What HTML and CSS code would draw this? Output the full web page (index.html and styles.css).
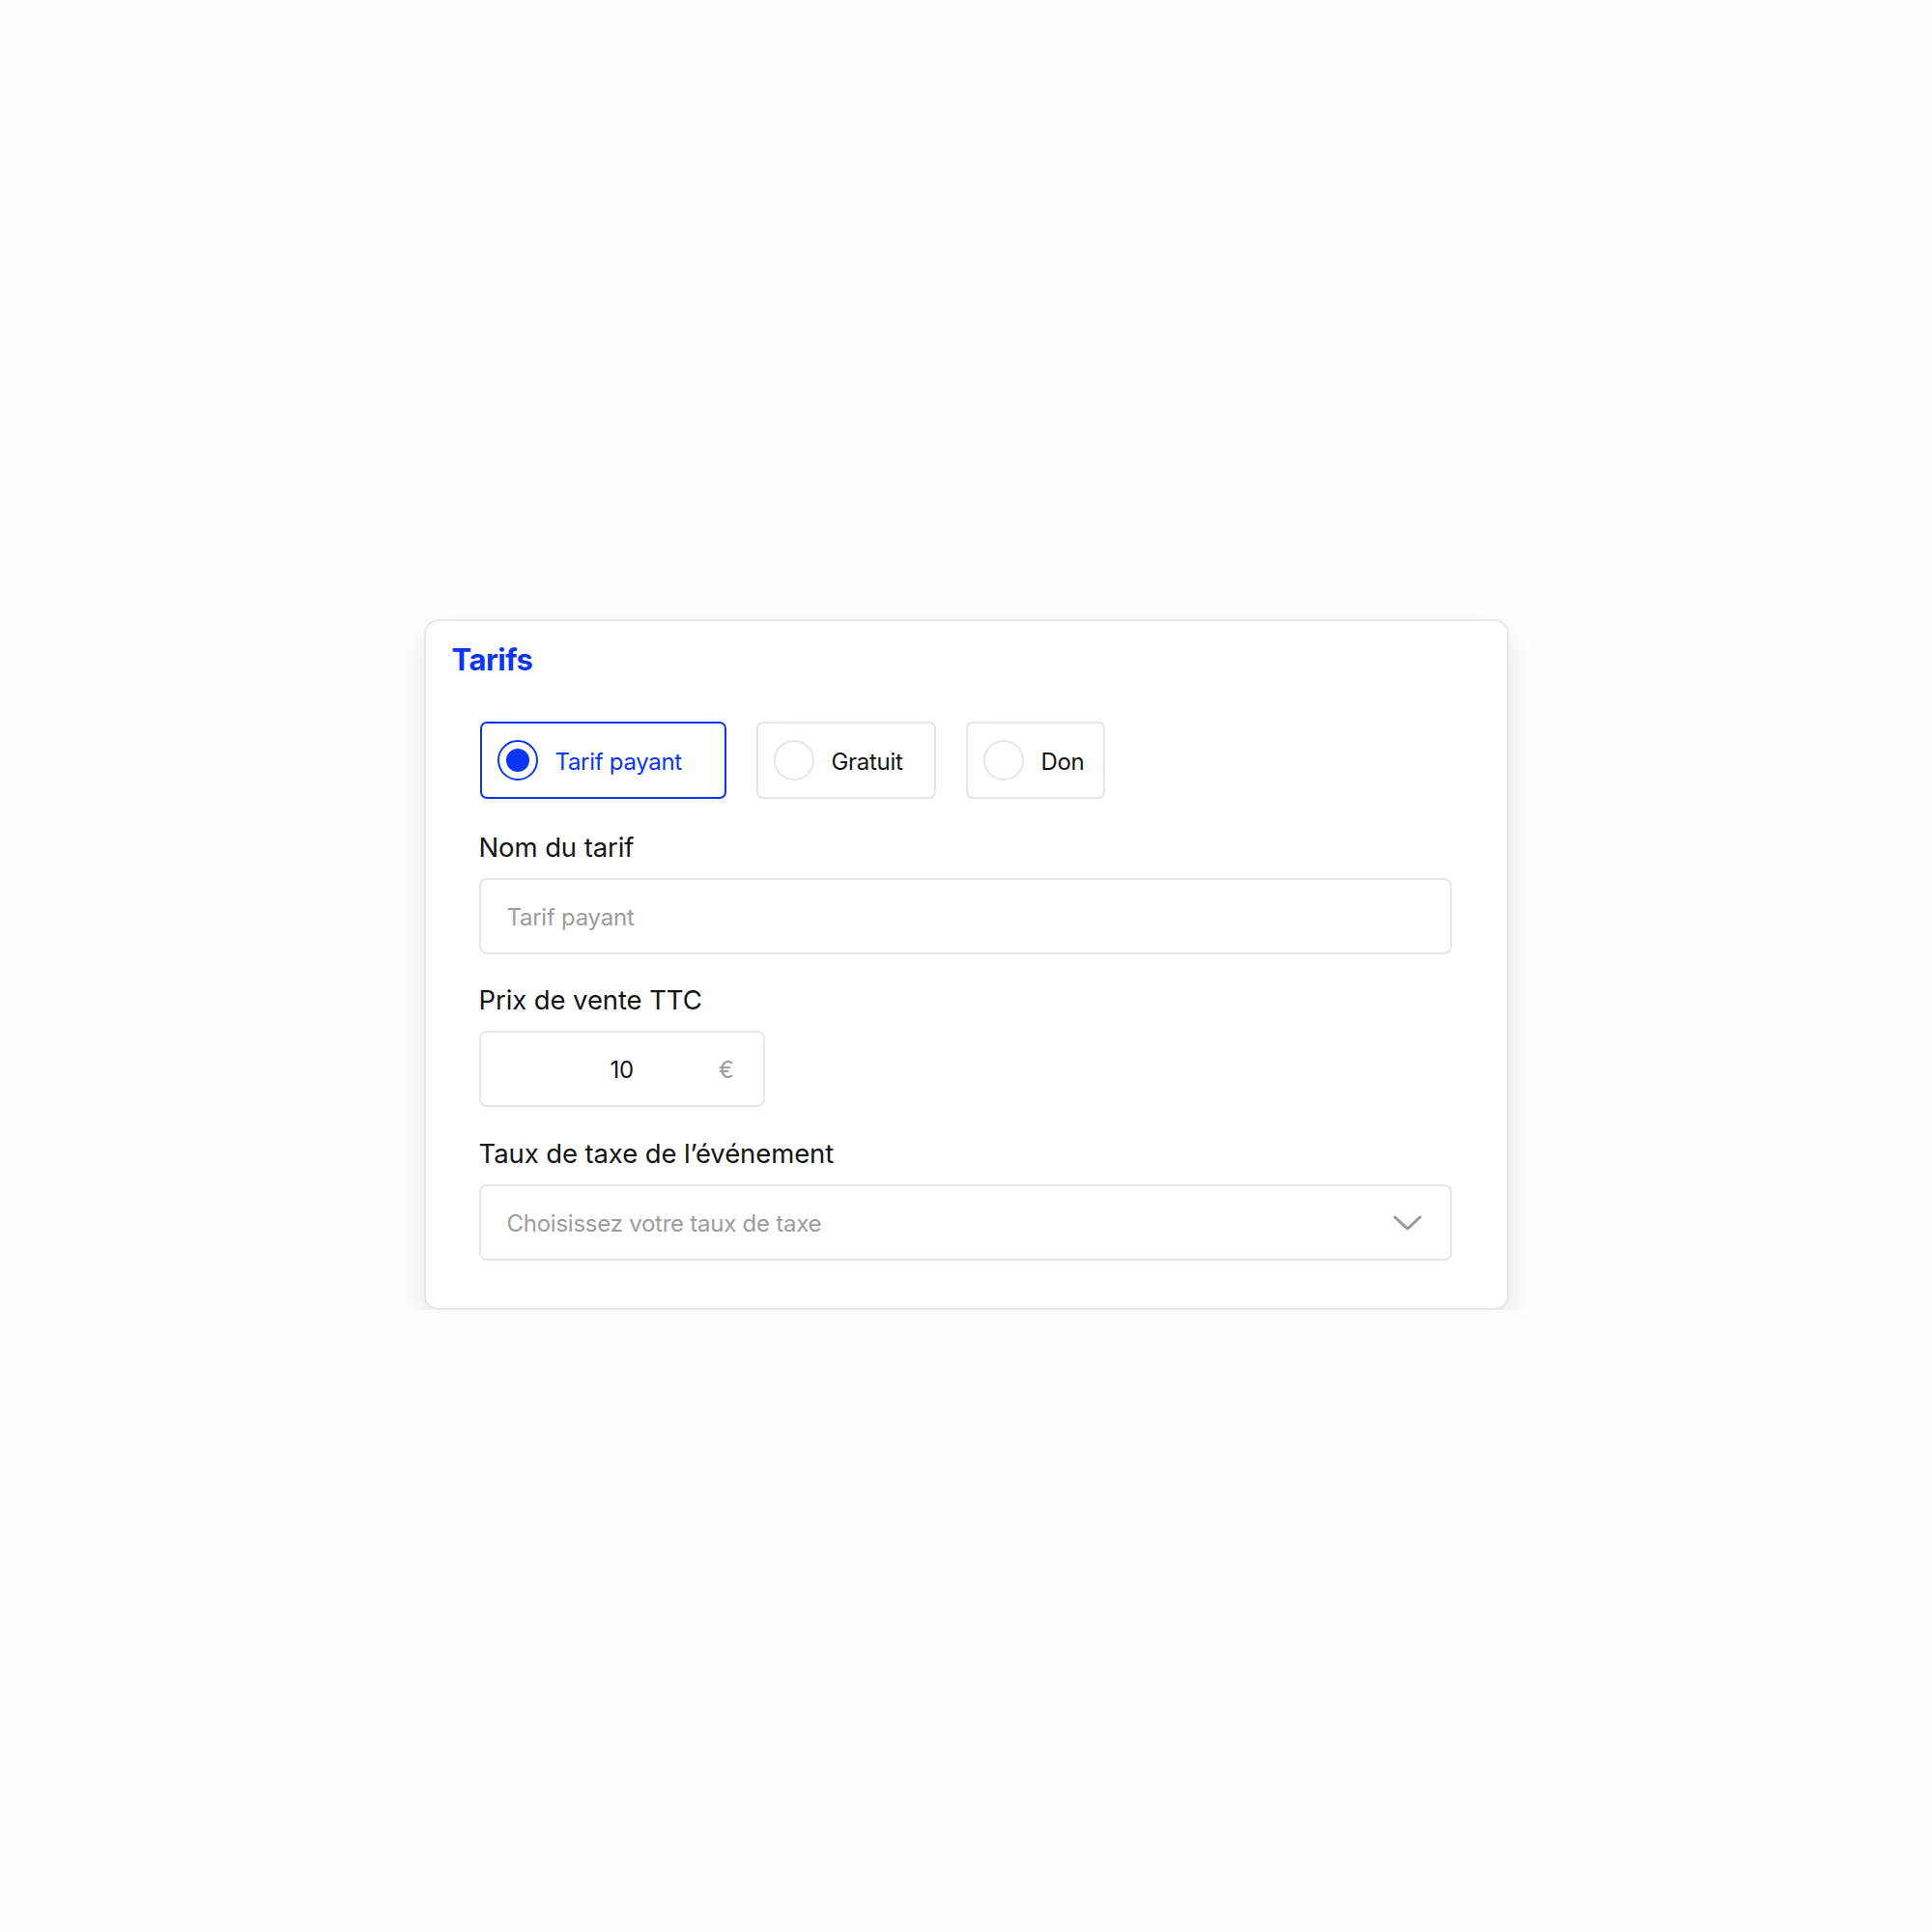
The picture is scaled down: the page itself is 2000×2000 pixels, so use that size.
FILE: index.html
```html
<!DOCTYPE html>
<html lang="fr">
<head>
<meta charset="utf-8">
<title>Tarifs</title>
<link rel="stylesheet" href="styles.css">
</head>
<body>
<section class="card">
  <h2 class="card-title">Tarifs</h2>
  <div class="form">
    <div class="choices">
      <label class="choice choice--selected choice--paid">
        <span class="radio radio--on"><span class="radio-dot"></span></span>
        <span class="choice-text">Tarif payant</span>
      </label>
      <label class="choice choice--free">
        <span class="radio"></span>
        <span class="choice-text">Gratuit</span>
      </label>
      <label class="choice choice--don">
        <span class="radio"></span>
        <span class="choice-text">Don</span>
      </label>
    </div>

    <div class="field">
      <div class="field-label">Nom du tarif</div>
      <div class="input input--full"><span class="placeholder">Tarif payant</span></div>
    </div>

    <div class="field">
      <div class="field-label">Prix de vente TTC</div>
      <div class="input input--price"><span class="price-value">10</span><span class="currency">€</span></div>
    </div>

    <div class="field">
      <div class="field-label">Taux de taxe de l’événement</div>
      <div class="input input--full input--select">
        <span class="placeholder">Choisissez votre taux de taxe</span>
        <svg class="chevron" width="30" height="16" viewBox="0 0 30 16" aria-hidden="true"><path d="M2 2 L15 14 L28 2" fill="none" stroke="#999999" stroke-width="3" stroke-linecap="round" stroke-linejoin="round"/></svg>
      </div>
    </div>
  </div>
</section>
</body>
</html>
```

FILE: styles.css
```css
* { box-sizing: border-box; }

html, body {
  margin: 0;
  padding: 0;
  background: #fdfdfe;
}

body {
  font-family: "Inter", "Noto Sans", sans-serif;
  color: #141414;
  padding-top: 641px;
}

.card {
  width: 1123px;
  height: 715px;
  margin: 0 auto;
  background: #ffffff;
  border: 2px solid #e6e8ec;
  border-radius: 15px;
  box-shadow: 0 16px 30px -6px rgba(20, 30, 60, 0.16);
  padding: 21px 56px 0 55px;
}

.card-title {
  margin: 0 0 0 -28px;
  font-size: 31px;
  line-height: 38px;
  font-weight: 700;
  color: #0a35f5;
  letter-spacing: -0.5px;
}

.form {
  margin-top: 45px;
}

.choices {
  display: flex;
  gap: 31px;
  margin-left: 1px;
}

.choice {
  display: flex;
  align-items: center;
  height: 80px;
  padding-left: 16px;
  border: 2px solid #e4e6eb;
  border-radius: 7px;
  background: #fff;
}

.choice--paid { width: 255px; }
.choice--free { width: 186px; }
.choice--don { width: 144px; }

.choice--selected {
  border-color: #0a35f5;
}

.radio {
  width: 42px;
  height: 42px;
  border-radius: 50%;
  border: 2px solid #e4e6eb;
  display: flex;
  align-items: center;
  justify-content: center;
  flex-shrink: 0;
}

.radio--on {
  border-color: #0a35f5;
}

.radio-dot {
  width: 24px;
  height: 24px;
  border-radius: 50%;
  background: #0a35f5;
}

.choice-text {
  margin-left: 18px;
  padding-top: 3px;
  font-size: 24px;
  line-height: 30px;
  letter-spacing: -0.3px;
  color: #141414;
}

.choice--selected .choice-text {
  color: #0a35f5;
}

.field {
  margin-top: 30px;
}

.choices + .field {
  margin-top: 33px;
}

.field-label {
  font-size: 27.5px;
  line-height: 34px;
  letter-spacing: -0.1px;
  color: #141414;
}

.input {
  margin-top: 15px;
  height: 79px;
  padding-top: 3px;
  border: 2px solid #e4e6eb;
  border-radius: 8px;
  background: #fff;
  display: flex;
  align-items: center;
  font-size: 24px;
  line-height: 30px;
  letter-spacing: -0.25px;
}

.input--full {
  width: 1007px;
  padding-left: 27px;
  padding-right: 29px;
}

.field:last-child {
  margin-top: 31px;
}

.input--select {
  justify-content: space-between;
}

.placeholder {
  color: #9c9c9c;
}

.input--price {
  width: 296px;
  padding-left: 46px;
  padding-right: 30px;
}

.price-value {
  flex: 1;
  text-align: center;
  color: #141414;
}

.currency {
  color: #9c9c9c;
}

.chevron {
  display: block;
  flex-shrink: 0;
  margin-top: -3px;
}
```
